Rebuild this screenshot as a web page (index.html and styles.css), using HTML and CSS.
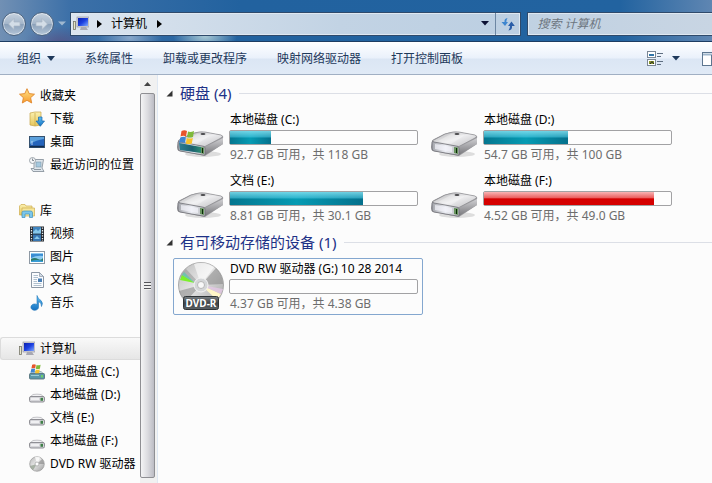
FILE: index.html
```html
<!DOCTYPE html>
<html lang="zh-CN">
<head>
    <meta charset="UTF-8">
    <meta name="viewport" content="width=device-width, initial-scale=1.0">
    <title>计算机</title>
    <link rel="stylesheet" href="styles.css">
</head>
<body>
    <!-- icons -->
    <svg class="sprite" width="0" height="0" aria-hidden="true">
        <defs>
            <linearGradient id="gTop" x1="0" y1="0" x2="1" y2="1">
                <stop offset="0" stop-color="#b0b0b2"/>
                <stop offset="0.5" stop-color="#ececee"/>
                <stop offset="1" stop-color="#bcbcbf"/>
            </linearGradient>
            <linearGradient id="gFront" x1="0" y1="0" x2="1" y2="0">
                <stop offset="0" stop-color="#a2a4aa"/>
                <stop offset="0.5" stop-color="#eceef4"/>
                <stop offset="1" stop-color="#b5b7bb"/>
            </linearGradient>
            <linearGradient id="gTeal" x1="0" y1="0" x2="1" y2="0">
                <stop offset="0" stop-color="#2f7f95"/>
                <stop offset="0.6" stop-color="#1b6170"/>
                <stop offset="1" stop-color="#2c8b72"/>
            </linearGradient>
            <linearGradient id="gSide" x1="0" y1="0" x2="0" y2="1">
                <stop offset="0" stop-color="#d0d0d3"/>
                <stop offset="1" stop-color="#77777b"/>
            </linearGradient>
            <linearGradient id="gDisc" x1="0" y1="0" x2="1" y2="1">
                <stop offset="0" stop-color="#b9b9b9"/>
                <stop offset="0.45" stop-color="#e6e6e6"/>
                <stop offset="1" stop-color="#9b9b9b"/>
            </linearGradient>
            <linearGradient id="gLabel" x1="0" y1="0" x2="0" y2="1">
                <stop offset="0" stop-color="#7c8286"/>
                <stop offset="0.5" stop-color="#3d4347"/>
                <stop offset="1" stop-color="#5c6266"/>
            </linearGradient>
            <linearGradient id="gScreen" x1="0" y1="0" x2="1" y2="1">
                <stop offset="0" stop-color="#0a1fae"/>
                <stop offset="0.5" stop-color="#1c3fe0"/>
                <stop offset="1" stop-color="#7fa9ff"/>
            </linearGradient>
            <linearGradient id="gStar" x1="0" y1="0" x2="0" y2="1">
                <stop offset="0" stop-color="#ffe58a"/>
                <stop offset="1" stop-color="#f79a2c"/>
            </linearGradient>
            <linearGradient id="gFolder" x1="0" y1="0" x2="0" y2="1">
                <stop offset="0" stop-color="#fbf0ae"/>
                <stop offset="1" stop-color="#e5c65c"/>
            </linearGradient>
            <linearGradient id="gBlue" x1="0" y1="0" x2="0" y2="1">
                <stop offset="0" stop-color="#5cc0f5"/>
                <stop offset="1" stop-color="#1570c0"/>
            </linearGradient>
        </defs>

        <symbol id="drive" viewBox="0 0 48 48">
            <ellipse cx="26" cy="41" rx="18" ry="3" fill="#000" opacity="0.12"/>
            <path d="M1 29 Q0 28 3 26 L13 21 Q22 18 27 19 L44 22 Q47 23 46 25 L46 31 L28 43 L2 38 Q0 37 0 34Z" fill="#9b9b9f"/>
            <path d="M1 28 L14 21 Q23 18 28 19 L44 22 Q47 23 44 25 L27 34 L4 30Z" fill="url(#gTop)" stroke="#8b8b8f" stroke-width="0.7"/>
            <path d="M7 28 L20 21 L34 22 L20 31Z" fill="#fff" opacity="0.3"/>
            <path d="M28 34 L46 25 L46 31 L28 42Z" fill="url(#gSide)"/>
            <path d="M1 29 Q1 28 3 29 L25 33 Q28 33 28 35 L28 41 Q28 43 26 42 L3 38 Q1 38 1 35Z" fill="url(#gFront)" stroke="#707076" stroke-width="0.8"/>
            <path d="M4 31 L21 34 L21 39 L4 36Z" fill="#f3f4fb" opacity="0.7"/>
            <path d="M23 34 L27 34.500 L27 41 L23 40Z" fill="#68945f"/>
            <path d="M25 35 L26 35 L26 40 L25 40Z" fill="#092b06"/>
            <ellipse cx="26" cy="21" rx="2.500" ry="1" fill="#47474a"/>
        </symbol>

        <symbol id="flag" viewBox="0 0 16 14">
            <path d="M3 1 Q6 -0.500 8.500 1 L7.500 6.500 Q5 5 2 6.500Z" fill="#e8552c"/>
            <path d="M9.500 1.500 Q12 2.500 15.500 1 L14.500 7 Q11 8 8.500 7Z" fill="#7fb93a"/>
            <path d="M1.800 7.500 Q5 6 7.300 7.500 L6.500 13 Q3 11.500 0.500 13Z" fill="#3f85d2"/>
            <path d="M8.300 8 Q11 9 14.300 8 L13.300 13.500 Q10 14.500 7.300 13.500Z" fill="#f8c32c"/>
        </symbol>

        <symbol id="drive-win" viewBox="0 0 48 48">
            <use href="#drive" width="48" height="48"/>
            <path d="M2 30 L24 34 L24 40 L3 37Z" fill="url(#gTeal)"/>
            <use href="#flag" x="1" y="17" width="17" height="14"/>
        </symbol>

        <symbol id="dvd" viewBox="0 0 48 48">
            <circle cx="24" cy="23" r="22.500" fill="url(#gDisc)" stroke="#9b9b9b" stroke-width="0.8"/>
            <path d="M24 23 L17 2 A22 22 0 0 1 37 5Z" fill="#fff" opacity="0.6"/>
            <path d="M24 23 L39 6 A22 22 0 0 1 46 22Z" fill="#858585" opacity="0.55"/>
            <path d="M24 23 L3 15 A22 22 0 0 1 9 7Z" fill="#8f8f8f" opacity="0.5"/>
            <path d="M18 21 L3 18 L5 13Z" fill="#7df02c"/>
            <path d="M18 21 L5 13 L7 10Z" fill="#47cfae" opacity="0.6"/>
            <path d="M24 23 L2 29 A22 22 0 0 0 9 39Z" fill="#7e7e7e" opacity="0.5"/>
            <path d="M24 23 L44 32 L40 38Z" fill="#fff6c8"/>
            <path d="M24 23 L46 27 L44 32Z" fill="#e5c8e6" opacity="0.8"/>
            <circle cx="24" cy="23" r="7" fill="#d4d6d8" stroke="#f4f4f4"/>
            <circle cx="24" cy="23" r="3.500" fill="#f8f8f8" stroke="#aaa" stroke-width="0.8"/>
            <rect x="6.500" y="34.500" width="35" height="13" rx="2" fill="url(#gLabel)" stroke="#2f3437"/>
        </symbol>

        <symbol id="computer" viewBox="0 0 16 16">
            <rect x="0.500" y="5.500" width="2" height="8" fill="#e6e6c8" stroke="#77776a" stroke-width="0.8"/>
            <rect x="4" y="1" width="12" height="10" fill="#d4d4dc" stroke="#8c8c98" stroke-width="0.6"/>
            <rect x="5" y="2" width="10" height="8" fill="url(#gScreen)"/>
            <path d="M8 11 h5 l2 3 h-8Z" fill="#a8a8b2"/>
        </symbol>

        <symbol id="star" viewBox="0 0 16 16">
            <path d="M8 0.700 L10.200 5.600 L15.500 6.200 L11.600 9.700 L12.700 15 L8 12.300 L3.300 15 L4.400 9.700 L0.500 6.200 L5.800 5.600Z" fill="url(#gStar)" stroke="#e0872c" stroke-width="0.9" stroke-linejoin="round"/>
        </symbol>

        <symbol id="download" viewBox="0 0 16 16">
            <path d="M1 2 L6 1 L12 1 L12 14 L6 15 L1 14Z" fill="url(#gFolder)" stroke="#c6a548" stroke-width="0.7"/>
            <path d="M6 2 V15" stroke="#cdae50" stroke-width="0.8"/>
            <path d="M9.500 6 H13 V10 H15.500 L11.300 15.300 L7 10 H9.500Z" fill="url(#gBlue)" stroke="#1766ad" stroke-width="0.7"/>
        </symbol>

        <symbol id="desktop" viewBox="0 0 16 16">
            <rect x="0.500" y="2.500" width="15" height="11" fill="#2463bb" stroke="#35516f"/>
            <path d="M1 3 H15 V5 Q7 6 1 10Z" fill="#5ba0dc"/>
            <path d="M1 12.500 H15" stroke="#122b4c" stroke-width="1.500"/>
            <path d="M2 8 h2 M2 10 h2" stroke="#cfe5ff" stroke-width="0.8"/>
        </symbol>

        <symbol id="recent" viewBox="0 0 16 16">
            <path d="M5 2.500 H14.500 L13 11 L15 14.500 H4 L2 11.500 H5Z" fill="#dfe6ec" stroke="#7f8a94" stroke-width="0.8"/>
            <rect x="7" y="5" width="5" height="5" fill="#a6c9df" stroke="#7d97a8" stroke-width="0.6"/>
            <path d="M5 12.500 H12" stroke="#8f9aa3"/>
            <circle cx="3.500" cy="3.500" r="3" fill="#f4f6f8" stroke="#8a949c" stroke-width="0.8"/>
            <path d="M3.500 1.500 V3.500 H5" fill="none" stroke="#56616b" stroke-width="0.7"/>
        </symbol>

        <symbol id="library" viewBox="0 0 16 16">
            <path d="M0.500 3 L2 1.500 H6 L7 3 H13 V12 H0.500Z" fill="url(#gFolder)" stroke="#cfae4f" stroke-width="0.7"/>
            <path d="M3 5 H15.500 V13 H3Z" fill="#f6e69a" stroke="#cfae4f" stroke-width="0.7"/>
            <path d="M3 14.500 V9.500 Q3 8 5 8 H11.500 Q13.500 8 13.500 9.500 V14.500 H10.500 V11 H6 V14.500Z" fill="#7cc6ea" stroke="#3d8fbe" stroke-width="0.7"/>
        </symbol>

        <symbol id="video" viewBox="0 0 16 16">
            <rect x="1" y="0.500" width="14" height="15" fill="#23282f"/>
            <rect x="4" y="1" width="8" height="6.500" fill="#3f83bd"/>
            <rect x="4" y="8.500" width="8" height="6.500" fill="#3776b2"/>
            <path d="M4 6 L7 3 L9 5 L12 2 V7.500 H4Z M5 13 L8 10 L11 13Z" fill="#86c7ea"/>
            <path d="M2.500 1.500 V15 M13.500 1.500 V15" stroke="#e9eef2" stroke-width="1.300" stroke-dasharray="1.300 1.300"/>
        </symbol>

        <symbol id="picture" viewBox="0 0 16 16">
            <rect x="0.500" y="2.500" width="15" height="12" fill="#fff" stroke="#8e99a4"/>
            <rect x="2" y="4" width="12" height="9" fill="#8ccbf1"/>
            <path d="M2 5 H14 V7 Q8 6 2 9Z" fill="#3a8cd2"/>
            <path d="M2 10 Q6 8 9 10 T14 9 V13 H2Z" fill="#2a7b6b"/>
            <path d="M2 12 Q8 10 14 12 V13 H2Z" fill="#3a9ed8"/>
        </symbol>

        <symbol id="doc" viewBox="0 0 16 16">
            <path d="M2.500 0.500 H10.500 L14.500 4.500 V15.500 H2.500Z" fill="#fbfcfe" stroke="#8b97a5"/>
            <path d="M10.500 0.500 V4.500 H14.500Z" fill="#d3dce6" stroke="#8b97a5" stroke-width="0.7"/>
            <path d="M4.500 3.500 H9 M4.500 5.500 H9 M4.500 7.500 H8 M4.500 9.500 H8 M4.500 11.500 H12.500 M4.500 13.500 H12.500" stroke="#9db0c2" stroke-width="0.8"/>
            <rect x="9" y="6.500" width="4" height="3.500" fill="#4a7fb5"/>
        </symbol>

        <symbol id="music" viewBox="0 0 16 16">
            <path d="M8 0.500 Q9 4 12 5.500 Q14.500 8 12.500 11.500 Q12.800 8 9.500 6.500 V12 A3.800 3.200 0 1 1 8 9.600Z" fill="url(#gBlue)" stroke="#2377b8" stroke-width="0.6"/>
        </symbol>

        <symbol id="drive-s" viewBox="0 0 16 16">
            <path d="M1 10 L4 7.500 Q8 6.800 12 7.500 L15 10Z" fill="#f2f2f4" stroke="#aeaeb2" stroke-width="0.7"/>
            <rect x="0.500" y="9.500" width="15" height="5.500" rx="1.500" fill="#d6d6da" stroke="#87878c" stroke-width="0.9"/>
            <path d="M2 12 H10" stroke="#f8f8fa" stroke-width="1.500"/>
            <rect x="11.500" y="10.800" width="2.500" height="3" fill="#3f7f47"/>
        </symbol>

        <symbol id="drive-win-s" viewBox="0 0 16 16">
            <path d="M1 10 L4 7.500 H12 L15 10Z" fill="#c7dbe2" stroke="#8ba1a9" stroke-width="0.7"/>
            <rect x="0.500" y="9.500" width="15" height="5.500" rx="1" fill="#5b97a9" stroke="#57747e" stroke-width="0.9"/>
            <path d="M2 11.500 H10" stroke="#9cccd8"/>
            <rect x="12" y="11" width="2" height="2.500" fill="#6fd069"/>
            <use href="#flag" x="1" y="0" width="11" height="9.500"/>
        </symbol>

        <symbol id="dvd-s" viewBox="0 0 16 16">
            <circle cx="8" cy="8" r="7.300" fill="url(#gDisc)" stroke="#999" stroke-width="0.7"/>
            <path d="M8 8 L6 1 A7 7 0 0 1 11 1.500Z" fill="#fff" opacity="0.8"/>
            <path d="M8 8 L13 3 A7 7 0 0 1 15 8Z" fill="#777" opacity="0.5"/>
            <path d="M8 8 L1 10 A7 7 0 0 0 4 14Z" fill="#7f8f7a" opacity="0.6"/>
            <circle cx="8" cy="8" r="2" fill="#fff" stroke="#a8a8a8" stroke-width="0.8"/>
        </symbol>
    </svg>

    <header class="titlebar">
        <button class="round" aria-label="后退">
            <svg width="14" height="14" viewBox="0 0 14 14"><path d="M7 1.500 L1.500 7 L7 12.500 V9 H13 V5 H7Z" fill="#d3dde7" stroke="#a9b6c4" stroke-width="0.7"/></svg>
        </button>
        <button class="round" aria-label="前进">
            <svg width="14" height="14" viewBox="0 0 14 14"><path d="M7 1.500 L12.500 7 L7 12.500 V9 H1 V5 H7Z" fill="#d3dde7" stroke="#a9b6c4" stroke-width="0.7"/></svg>
        </button>
        <button class="history" aria-label="最近页面">
            <svg width="8" height="5" viewBox="0 0 8 5"><path d="M0 0.500 H8 L4 4.500Z" fill="#9fb8d0"/></svg>
        </button>
        <div class="address">
            <svg width="16" height="16"><use href="#computer"/></svg>
            <svg class="crumb-arrow" width="5" height="8" viewBox="0 0 5 8"><path d="M0 0 L5 4 L0 8Z"/></svg>
            <button class="crumb">计算机</button>
            <svg class="crumb-arrow last" width="5" height="8" viewBox="0 0 5 8"><path d="M0 0 L5 4 L0 8Z"/></svg>
            <button class="drop" aria-label="以前的位置">
                <svg width="8" height="5" viewBox="0 0 8 5"><path d="M0 0 H8 L4 4.500Z" fill="#0b1033"/></svg>
            </button>
            <button class="refresh" aria-label="刷新">
                <svg width="14" height="14" viewBox="0 0 14 14">
                    <path d="M6.500 1 Q3 1.500 3.500 5 H0.500 L4 9 L7 5 H5.300 Q5.300 3 6.500 1Z" fill="#3e86cf"/>
                    <path d="M7.500 13.500 Q11.500 13 11 9 H13.800 L10.500 4.500 L7 9 H9 Q9 11.500 7.500 13.500Z" fill="#2b5ea8"/>
                </svg>
            </button>
        </div>
        <input class="search" type="text" placeholder="搜索 计算机" aria-label="搜索 计算机">
    </header>

    <div class="toolbar">
        <button>组织 <svg width="8" height="5" viewBox="0 0 8 5"><path d="M0 0 H8 L4 5Z" fill="#1e395b"/></svg></button>
        <button>系统属性</button>
        <button>卸载或更改程序</button>
        <button>映射网络驱动器</button>
        <button>打开控制面板</button>
        <div class="view-tools">
            <button aria-label="更改视图">
                <svg width="16" height="16" viewBox="0 0 16 16">
                    <rect x="0.500" y="0.500" width="8" height="6" fill="#fff" stroke="#7b8794"/>
                    <rect x="2" y="3" width="5" height="2" fill="#2f74a8"/>
                    <rect x="0.500" y="8.500" width="8" height="6" fill="#fff" stroke="#7b8794"/>
                    <path d="M2 10 h5 v3 h-5Z" fill="#8b9a2c"/>
                    <path d="M3 13 L5 10.500 L7 13" fill="none" stroke="#222"/>
                    <path d="M10 2.500 H16 M10 5.500 H14 M10 10.500 H16 M10 13.500 H14" stroke="#5f6f82"/>
                </svg>
            </button>
            <button aria-label="更多选项">
                <svg width="8" height="5" viewBox="0 0 8 5"><path d="M0 0 H8 L4 4.500Z" fill="#1e395b"/></svg>
            </button>
            <button aria-label="显示预览窗格">
                <svg width="10" height="14" viewBox="0 0 10 14">
                    <rect x="0.500" y="0.500" width="15" height="13" fill="#fff" stroke="#5d7690"/>
                    <path d="M1 2.500 H10" stroke="#9fb6cc" stroke-width="2"/>
                    <path d="M9.500 3 V13" stroke="#5d7690"/>
                </svg>
            </button>
        </div>
    </div>

    <div class="window">
        <nav class="sidebar">
            <ul>
                <li><a href="#"><svg><use href="#star"/></svg>收藏夹</a>
                    <ul>
                        <li><a href="#"><svg><use href="#download"/></svg>下载</a></li>
                        <li><a href="#"><svg><use href="#desktop"/></svg>桌面</a></li>
                        <li><a href="#"><svg><use href="#recent"/></svg>最近访问的位置</a></li>
                    </ul>
                </li>
                <li><a href="#"><svg><use href="#library"/></svg>库</a>
                    <ul>
                        <li><a href="#"><svg><use href="#video"/></svg>视频</a></li>
                        <li><a href="#"><svg><use href="#picture"/></svg>图片</a></li>
                        <li><a href="#"><svg><use href="#doc"/></svg>文档</a></li>
                        <li><a href="#"><svg><use href="#music"/></svg>音乐</a></li>
                    </ul>
                </li>
                <li><a href="#" class="selected"><svg><use href="#computer"/></svg>计算机</a>
                    <ul>
                        <li><a href="#"><svg><use href="#drive-win-s"/></svg>本地磁盘 (C:)</a></li>
                        <li><a href="#"><svg><use href="#drive-s"/></svg>本地磁盘 (D:)</a></li>
                        <li><a href="#"><svg><use href="#drive-s"/></svg>文档 (E:)</a></li>
                        <li><a href="#"><svg><use href="#drive-s"/></svg>本地磁盘 (F:)</a></li>
                        <li><a href="#"><svg><use href="#dvd-s"/></svg>DVD RW 驱动器</a></li>
                    </ul>
                </li>
            </ul>
        </nav>
        <div class="scrollbar">
            <button class="scroll-up" aria-label="向上滚动">
                <svg width="7" height="4" viewBox="0 0 7 4"><path d="M3.500 0 L7 4 H0Z" fill="#444"/></svg>
            </button>
            <div class="thumb"><span class="grip"></span></div>
        </div>

        <main class="content">
            <h2><svg width="7" height="7" viewBox="0 0 7 7"><path d="M6.500 0.500 V6.500 H0.500Z" fill="#333"/></svg>硬盘 (4)</h2>
            <div class="tiles">
                <a href="#" class="tile">
                    <svg><use href="#drive-win"/></svg>
                    <div class="info">
                        <span>本地磁盘 (C:)</span>
                        <div class="bar"><div class="fill" style="width: 22%"></div></div>
                        <span class="free">92.7 GB 可用，共 118 GB</span>
                    </div>
                </a>
                <a href="#" class="tile">
                    <svg><use href="#drive"/></svg>
                    <div class="info">
                        <span>本地磁盘 (D:)</span>
                        <div class="bar"><div class="fill" style="width: 45%"></div></div>
                        <span class="free">54.7 GB 可用，共 100 GB</span>
                    </div>
                </a>
                <a href="#" class="tile">
                    <svg><use href="#drive"/></svg>
                    <div class="info">
                        <span>文档 (E:)</span>
                        <div class="bar"><div class="fill" style="width: 71%"></div></div>
                        <span class="free">8.81 GB 可用，共 30.1 GB</span>
                    </div>
                </a>
                <a href="#" class="tile">
                    <svg><use href="#drive"/></svg>
                    <div class="info">
                        <span>本地磁盘 (F:)</span>
                        <div class="bar"><div class="fill full" style="width: 91%"></div></div>
                        <span class="free">4.52 GB 可用，共 49.0 GB</span>
                    </div>
                </a>
            </div>

            <h2><svg width="7" height="7" viewBox="0 0 7 7"><path d="M6.500 0.500 V6.500 H0.500Z" fill="#333"/></svg>有可移动存储的设备 (1)</h2>
            <div class="tiles">
                <a href="#" class="tile active">
                    <svg viewBox="0 0 48 48">
                        <use href="#dvd"/>
                        <text x="24" y="45" text-anchor="middle" class="dvd-text">DVD-R</text>
                    </svg>
                    <div class="info">
                        <span>DVD RW 驱动器 (G:) 10 28 2014</span>
                        <div class="bar"></div>
                        <span class="free">4.37 GB 可用，共 4.38 GB</span>
                    </div>
                </a>
            </div>
        </main>
    </div>
</body>
</html>
```
FILE: styles.css
```css
* {
    box-sizing: border-box;
}

body {
    margin: 0;
    height: 100vh;
    display: flex;
    flex-direction: column;
    overflow: hidden;
    font-family: "Noto Sans", "Noto Sans CJK SC", sans-serif;
    font-size: 12px;
    line-height: 16px;
    color: #000;
    background-color: #fcfcfc;
}

button {
    padding: 0;
    border: none;
    background: none;
    font: inherit;
    color: inherit;
}

a {
    color: inherit;
    text-decoration: none;
}

svg {
    flex: none;
}

.sprite {
    position: absolute;
}

.dvd-text {
    font-size: 10px;
    font-weight: bold;
    fill: #fff;
}

/* title bar */
.titlebar {
    display: flex;
    align-items: center;
    flex: none;
    height: 42px;
    padding: 6px 0 0 2px;
    border-bottom: 1px solid #1d3d63;
    background:
        radial-gradient(ellipse 32px 18px at 205px 36px, rgba(200, 225, 225, 0.8), transparent),
        radial-gradient(ellipse 32px 18px at 130px 38px, rgba(190, 205, 225, 0.6), transparent),
        radial-gradient(ellipse 36px 16px at 60px 42px, rgba(90, 70, 120, 0.6), transparent),
        linear-gradient(to right, #7190b4 0, #3c70a8 70px, #22629f 240px, #2263a0 620px, #5f86b2 712px);
}

.round {
    display: flex;
    align-items: center;
    justify-content: center;
    width: 24px;
    height: 24px;
    margin-right: 4px;
    border: 1px solid #4b637f;
    border-radius: 50%;
    background: linear-gradient(#c6d2df, #a3b5c9 50%, #8ba1ba 52%, #b4c5d7);
    box-shadow: inset 0 0 0 1px rgba(255, 255, 255, 0.5);
}

.history {
    display: flex;
    justify-content: center;
    width: 8px;
    margin-right: 4px;
}

.address {
    display: flex;
    align-items: center;
    flex: 1;
    height: 24px;
    padding-left: 2px;
    border: 1px solid #2f4a6b;
    background: linear-gradient(to right, #dce5ef, #c2d3e4 60%, #bccfe2);
    box-shadow: inset 0 0 0 1px #dfe8f1;
}

.crumb-arrow {
    margin: 0 9px 0 8px;
}

.crumb-arrow.last {
    margin-left: 10px;
}

.drop {
    display: flex;
    align-items: center;
    justify-content: center;
    width: 20px;
    height: 22px;
    margin-left: auto;
}

.refresh {
    display: flex;
    align-items: center;
    justify-content: center;
    width: 25px;
    height: 22px;
    border-left: 1px solid #6c86a3;
}

.search {
    flex: none;
    width: 26%;
    height: 24px;
    margin-left: 6px;
    padding: 0 9px;
    border: 1px solid #2f4a6b;
    border-right: none;
    background: linear-gradient(to right, #c0d1e2, #c8d5e3);
    box-shadow: inset 1px 1px 0 #dfe8f1, inset 0 -1px 0 #dfe8f1;
    font: italic 12px "Noto Sans", "Noto Sans CJK SC", sans-serif;
}

.search::placeholder {
    color: #6d7680;
    opacity: 1;
}

/* toolbar */
.toolbar {
    display: flex;
    align-items: center;
    flex: none;
    height: 33px;
    padding-left: 2px;
    color: #1e395b;
    background: linear-gradient(#fdfeff, #eaf1fb 48%, #dbe6f4 52%, #e0eaf6);
    border-top: 1px solid #fff;
    border-bottom: 1px solid #a0afc3;
}

.toolbar > button {
    display: flex;
    align-items: center;
    gap: 6px;
    padding: 0 15px;
}

.view-tools {
    display: flex;
    align-items: center;
    margin-left: auto;
}

.view-tools button {
    display: flex;
    margin-left: 9px;
}

.view-tools button:last-child {
    margin-left: 22px;
}

/* panes */
.window {
    display: flex;
    flex: 1;
    min-height: 0;
}

.sidebar {
    flex: none;
    width: 140px;
    padding-top: 9px;
    overflow: hidden;
    white-space: nowrap;
}

.sidebar ul {
    margin: 0;
    padding: 0;
    list-style: none;
}

.sidebar > ul > li {
    margin-bottom: 23px;
}

.sidebar a {
    display: flex;
    align-items: center;
    gap: 5px;
    height: 23px;
    padding-left: 19px;
}

.sidebar ul ul a {
    padding-left: 29px;
}

.sidebar svg {
    width: 16px;
    height: 16px;
}

.sidebar .selected {
    border: 1px solid #dcdcdc;
    border-right: none;
    border-radius: 3px 0 0 3px;
    padding-left: 18px;
    background: linear-gradient(#f9f9f9, #e6e6e6);
}

.scrollbar {
    display: flex;
    flex-direction: column;
    flex: none;
    width: 18px;
    padding: 0 2px 5px 0;
    border-right: 1px solid #dfe8f3;
    background-color: #f1f1f1;
}

.scroll-up {
    display: flex;
    align-items: center;
    justify-content: center;
    height: 18px;
}

.thumb {
    display: flex;
    align-items: center;
    justify-content: center;
    flex: 1;
    border: 1px solid #8f8f93;
    border-radius: 2px;
    background: linear-gradient(to right, #f4f4f5, #dcdce0 50%, #bcbcc4);
}

.grip {
    width: 7px;
    height: 8px;
    background: repeating-linear-gradient(#55555a 0, #55555a 1px, #eee 1px, #eee 3px);
}

.content {
    flex: 1;
    min-width: 0;
    padding: 3px 0 0 15px;
}

h2 {
    display: flex;
    align-items: center;
    margin: 4px 0 5px -7px;
    font-size: 15px;
    font-weight: normal;
    line-height: 22px;
    color: #1e3287;
}

h2 svg {
    margin-right: 7px;
}

h2::after {
    content: "";
    flex: 1;
    height: 1px;
    margin-left: 8px;
    background-color: #dcdfe6;
}

.tiles {
    display: grid;
    grid-template-columns: repeat(auto-fill, 250px);
    gap: 4px;
}

.tile {
    display: flex;
    height: 57px;
    padding: 2px 4px 0 3px;
    border: 1px solid transparent;
    border-radius: 2px;
}

.tile.active {
    border-color: #84a7cf;
}

.tile > svg {
    width: 48px;
    height: 48px;
    margin: 1px 4px 0 0;
}

.info {
    flex: 1;
    min-width: 0;
    white-space: nowrap;
}

.info span {
    display: block;
    padding-left: 1px;
}

.bar {
    height: 15px;
    margin: 2px 0;
    border: 1px solid #a2a2a4;
    border-radius: 2px;
    background-color: #fdfdfd;
}

.fill {
    height: 100%;
    background: linear-gradient(rgba(140, 230, 245, 0.8), rgba(80, 205, 230, 0.5) 48%, transparent 52%), linear-gradient(to right, #04768f, #069bb3 50%, #04708c);
}

.fill.full {
    background: linear-gradient(#f9b4b4, #ea5c5c 46%, #d40000 52%, #d60000);
}

.info .free {
    color: #6d6d6d;
}
```
